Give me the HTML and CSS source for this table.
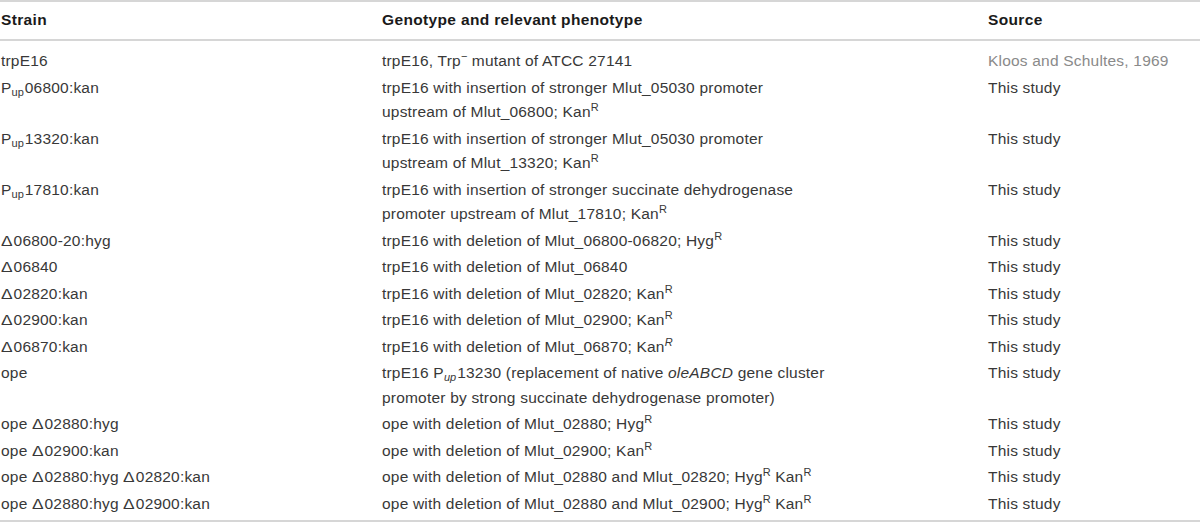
FILE: index.html
```html
<!DOCTYPE html>
<html>
<head>
<meta charset="utf-8">
<link rel="stylesheet" href="styles.css">
</head>
<body>
<table class="strains">
  <colgroup>
    <col class="c1"><col class="c2"><col class="c3">
  </colgroup>
  <thead>
    <tr><th>Strain</th><th>Genotype and relevant phenotype</th><th>Source</th></tr>
  </thead>
  <tbody>
    <tr class="first"><td>trpE16</td><td>trpE16, Trp<sup>−</sup> mutant of ATCC 27141</td><td class="ref">Kloos and Schultes, 1969</td></tr>
    <tr><td>P<sub>up</sub>06800:kan</td><td>trpE16 with insertion of stronger Mlut_05030 promoter<br>upstream of Mlut_06800; Kan<sup>R</sup></td><td>This study</td></tr>
    <tr><td>P<sub>up</sub>13320:kan</td><td>trpE16 with insertion of stronger Mlut_05030 promoter<br>upstream of Mlut_13320; Kan<sup>R</sup></td><td>This study</td></tr>
    <tr><td>P<sub>up</sub>17810:kan</td><td>trpE16 with insertion of stronger succinate dehydrogenase<br>promoter upstream of Mlut_17810; Kan<sup>R</sup></td><td>This study</td></tr>
    <tr><td><span class="d">Δ</span>06800-20:hyg</td><td>trpE16 with deletion of Mlut_06800-06820; Hyg<sup>R</sup></td><td>This study</td></tr>
    <tr><td><span class="d">Δ</span>06840</td><td>trpE16 with deletion of Mlut_06840</td><td>This study</td></tr>
    <tr><td><span class="d">Δ</span>02820:kan</td><td>trpE16 with deletion of Mlut_02820; Kan<sup>R</sup></td><td>This study</td></tr>
    <tr><td><span class="d">Δ</span>02900:kan</td><td>trpE16 with deletion of Mlut_02900; Kan<sup>R</sup></td><td>This study</td></tr>
    <tr><td><span class="d">Δ</span>06870:kan</td><td>trpE16 with deletion of Mlut_06870; Kan<sup><i>R</i></sup></td><td>This study</td></tr>
    <tr><td>ope</td><td>trpE16 P<sub><i>up</i></sub>13230 (replacement of native <i>oleABCD</i> gene cluster<br>promoter by strong succinate dehydrogenase promoter)</td><td>This study</td></tr>
    <tr><td>ope <span class="d">Δ</span>02880:hyg</td><td>ope with deletion of Mlut_02880; Hyg<sup>R</sup></td><td>This study</td></tr>
    <tr><td>ope <span class="d">Δ</span>02900:kan</td><td>ope with deletion of Mlut_02900; Kan<sup>R</sup></td><td>This study</td></tr>
    <tr><td>ope <span class="d">Δ</span>02880:hyg <span class="d">Δ</span>02820:kan</td><td>ope with deletion of Mlut_02880 and Mlut_02820; Hyg<sup>R</sup> Kan<sup>R</sup></td><td>This study</td></tr>
    <tr class="last"><td>ope <span class="d">Δ</span>02880:hyg <span class="d">Δ</span>02900:kan</td><td>ope with deletion of Mlut_02880 and Mlut_02900; Hyg<sup>R</sup> Kan<sup>R</sup></td><td>This study</td></tr>
  </tbody>
</table>
</body>
</html>
```
FILE: styles.css
```css
html, body {
  margin: 0;
  padding: 0;
  background: #fff;
}
.strains {
  width: 1200px;
  border-collapse: collapse;
  font-family: "Liberation Sans", Arial, sans-serif;
  font-size: 15.5px;
  letter-spacing: 0.2px;
  color: #383838;
  border-top: 2px solid #d6d6d6;
  border-bottom: 2px solid #d6d6d6;
}
.c1 { width: 381px; }
.c2 { width: 606px; }
.c3 { width: 213px; }
.strains th {
  text-align: left;
  font-weight: bold;
  color: #1a1a1a;
  letter-spacing: 0.35px;
  padding: 7px 1px 8px;
  line-height: 22px;
  border-bottom: 2px solid #d6d6d6;
}
.strains td {
  vertical-align: top;
  padding: 1px 1px;
  line-height: 24.5px;
}
.strains tr.first td { padding-top: 8px; }
.strains tr.last td { padding-bottom: 4px; }
.strains sup, .strains sub {
  font-size: 11px;
  line-height: 0;
  letter-spacing: 0;
}
.strains sup { vertical-align: 6px; }
.strains sub { vertical-align: -3px; margin-right: 1px; }
.d {
  display: inline-block;
  margin-right: 2px;
  transform: scaleX(1.12);
  transform-origin: left center;
}
.ref { color: #8a8a8a; }
```
